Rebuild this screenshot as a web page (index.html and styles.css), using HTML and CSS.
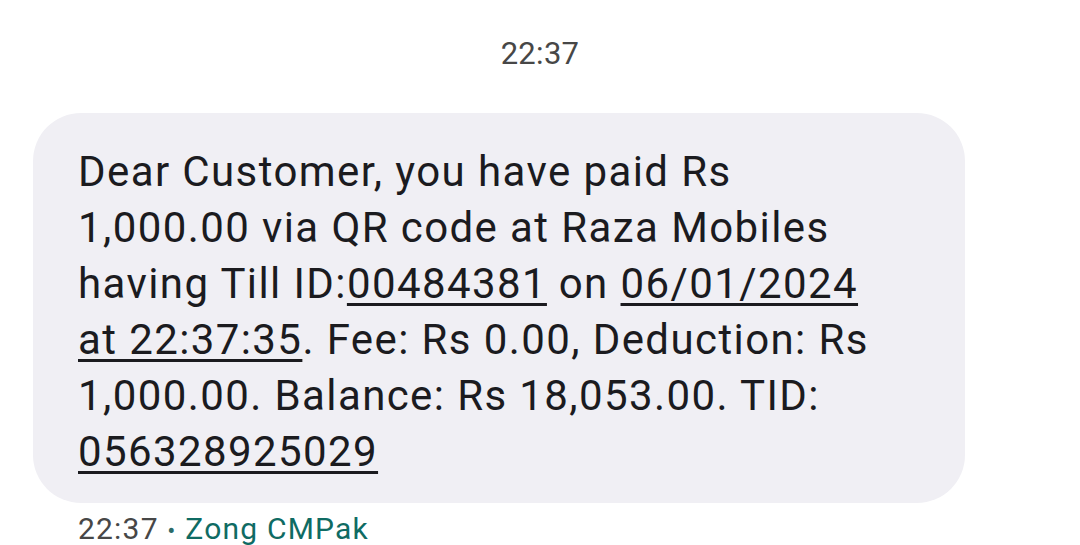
FILE: index.html
```html
<!DOCTYPE html>
<html>
<head>
<meta charset="utf-8">
<link rel="stylesheet" href="styles.css">
</head>
<body>
<div class="screen">
  <div class="stamp">22:37</div>
  <div class="bubble">
    <p class="msg">Dear Customer, you have paid Rs<br>1,000.00 via QR code at Raza Mobiles<br>having Till ID:<span class="link">00484381</span> on <span class="link">06/01/2024</span><br><span class="link">at 22:37:35</span>. Fee: Rs 0.00, Deduction: Rs<br>1,000.00. Balance: Rs 18,053.00. TID:<br><span class="link">056328925029</span></p>
  </div>
  <div class="meta">22:37 <span class="dot">•</span> <span class="sender">Zong CMPak</span></div>
</div>
</body>
</html>
```

FILE: styles.css
```css
html, body {
  margin: 0;
  padding: 0;
  background: #ffffff;
}
body {
  font-family: Roboto, "Noto Sans", sans-serif;
  width: 1080px;
  height: 545px;
  overflow: hidden;
}
.screen {
  display: flex;
  flex-direction: column;
  padding: 0 115px 0 33px;
}
.stamp {
  align-self: center;
  margin-left: 82px;
  margin-top: 33px;
  font-size: 31px;
  line-height: 42px;
  color: #474747;
  letter-spacing: 0.3px;
}
.bubble {
  margin-top: 38px;
  background: #f0eff4;
  border-radius: 48px;
  padding: 31px 40px 23px 45px;
}
.msg {
  margin: 0;
  font-size: 42px;
  line-height: 56px;
  letter-spacing: 1.4px;
  color: #1b1b1f;
}
.link {
  text-decoration: underline;
  text-decoration-thickness: 3px;
  text-underline-offset: 5px;
}
.meta {
  margin-top: 6px;
  margin-left: 45px;
  font-size: 30px;
  line-height: 40px;
  letter-spacing: 1.2px;
  color: #474747;
}
.dot {
  color: #2c6b68;
  font-size: 24px;
}
.sender {
  color: #0f6b63;
}
```
